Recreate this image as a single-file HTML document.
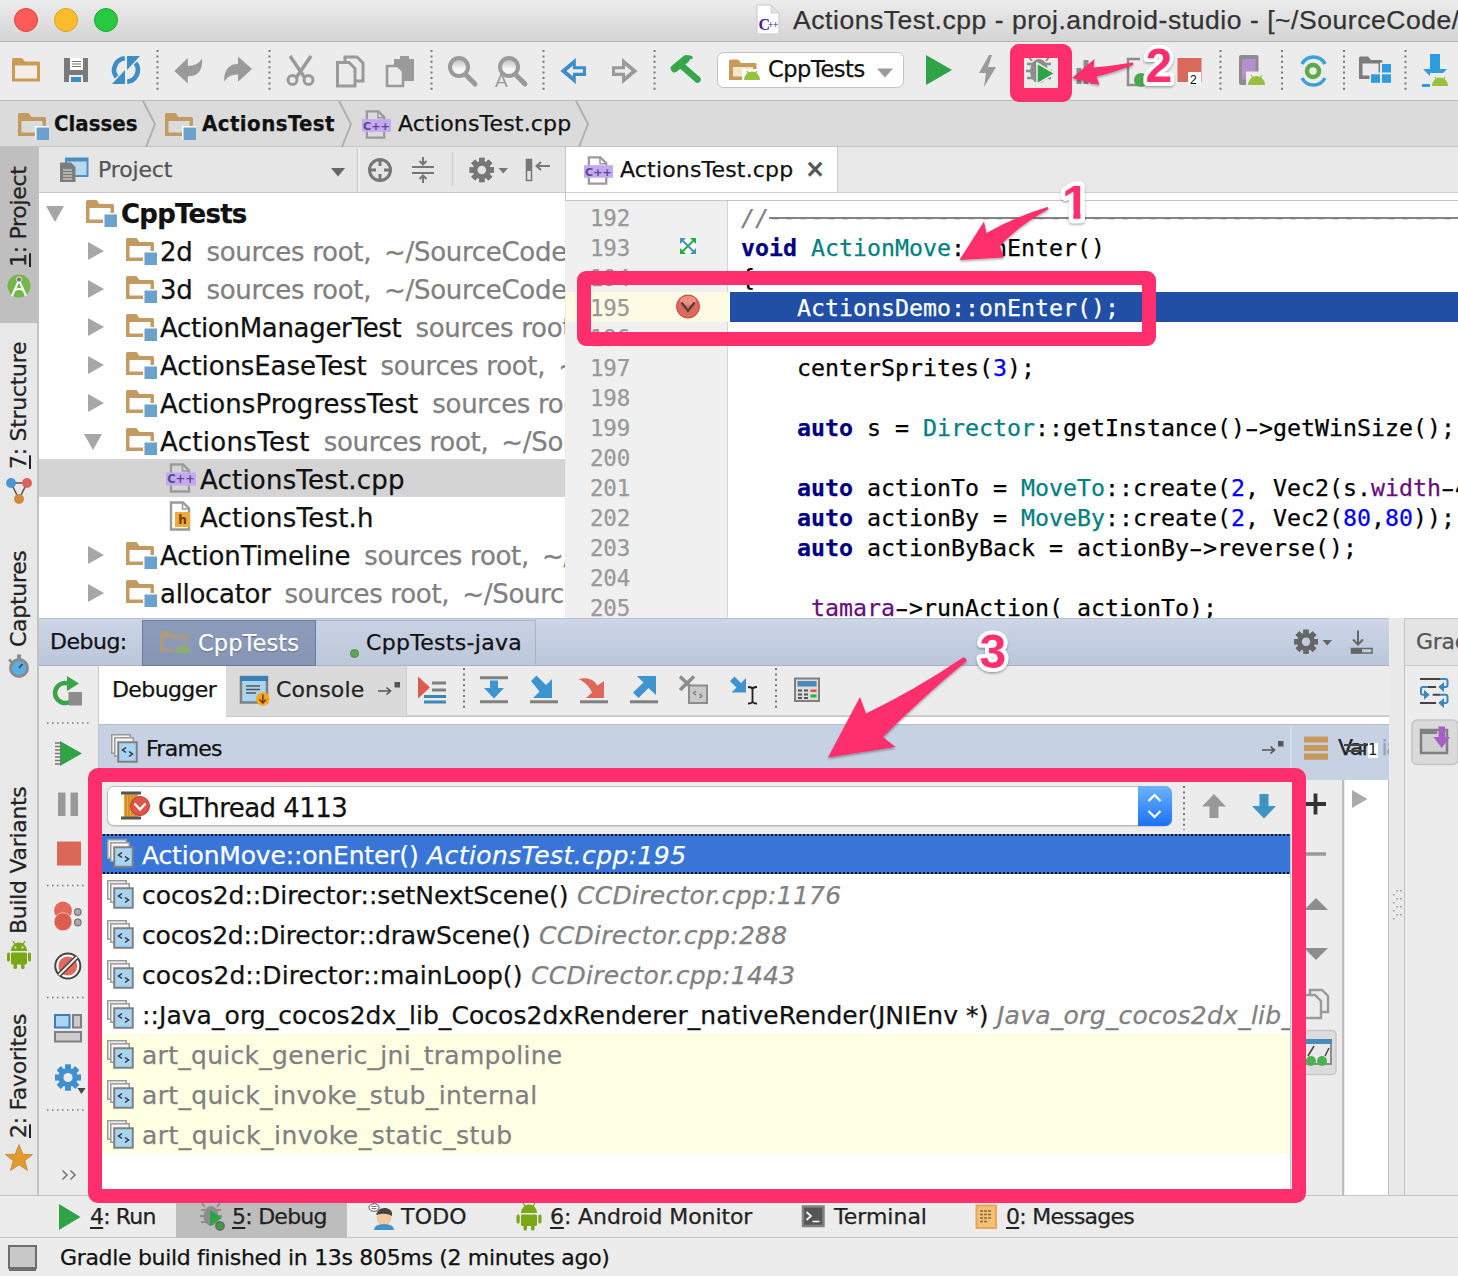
<!DOCTYPE html>
<html><head><meta charset="utf-8"><title>ActionsTest.cpp</title>
<style>
*{box-sizing:border-box;margin:0;padding:0}
html,body{width:1458px;height:1276px;overflow:hidden;background:#ececec}
body{position:relative;-webkit-text-stroke:0.25px;font-family:"DejaVu Sans","Liberation Sans",sans-serif;font-size:22px;color:#1a1a1a;-webkit-font-smoothing:antialiased}
.abs{position:absolute}
.t{position:absolute;white-space:pre;line-height:1}
svg{position:absolute;overflow:visible}
#titlebar{left:0;top:0;width:1458px;height:42px;background:linear-gradient(#ececec,#d4d4d4);border-bottom:1px solid #b4b4b4}
.tl{position:absolute;top:8px;width:24px;height:24px;border-radius:50%}
#toolbar{left:0;top:42px;width:1458px;height:59px;background:#ececec;border-bottom:1px solid #bdbdbd}
#navbar{left:0;top:101px;width:1458px;height:46px;background:#e0e0e0;border-bottom:1px solid #c4c4c4}
#leftstrip{left:0;top:147px;width:39px;height:1048px;background:#e8e8e8;border-right:2px solid #c2c2c2}
#projhead{left:39px;top:147px;width:526px;height:46px;background:#e6e6e6;border-bottom:1px solid #c9c9c9}
#tree{left:39px;top:193px;width:526px;height:425px;background:#fff;overflow:hidden}

#edtabs{left:565px;top:147px;width:893px;height:54px;background:#e8e8e8;border-left:1px solid #c4c4c4}
#edtab{left:566px;top:147px;width:272px;height:48px;background:#fff;border-right:1px solid #c9c9c9}
#edstrip{left:566px;top:192px;width:892px;height:10px;background:#fff;border-bottom:2px solid #c6c6c6;border-top:1px solid #d0d0d0}
#editor{left:566px;top:201px;width:892px;height:417px;background:#fff;overflow:hidden;border:0}
#gutter{left:0;top:0;width:162px;height:417px;background:#f0f0f0;border-right:1px solid #d4d4d4}
.ln{position:absolute;left:24px;font-family:"DejaVu Sans Mono","Liberation Mono",monospace;font-size:22.5px;color:#999;line-height:30px;height:30px;white-space:pre;letter-spacing:-0.2px}
.cl{position:absolute;left:175px;font-family:"DejaVu Sans Mono","Liberation Mono",monospace;font-size:23.25px;color:#000;line-height:30px;height:30px;white-space:pre}
.kw{color:#000080;font-weight:bold}.ty{color:#008080}.nu{color:#0000ff}.fd{color:#660e7a}.cm{color:#808080;font-style:italic}

.row{position:absolute;left:0;width:526px;height:38px}
.tt{position:absolute;top:5.500px;font-size:26px;line-height:30px;white-space:pre;letter-spacing:-0.3px;color:#111}
.tt i{font-style:normal;color:#808080;margin-left:14px;word-spacing:0px}
.tri-r{position:absolute;width:0;height:0;border-left:16px solid #a6a6a6;border-top:9px solid transparent;border-bottom:9px solid transparent}
.tri-d{position:absolute;width:0;height:0;border-top:16px solid #a6a6a6;border-left:9px solid transparent;border-right:9px solid transparent}
.vt{position:absolute;left:0;width:300px;height:38px;line-height:38px;font-size:22px;white-space:pre;transform-origin:0 0;transform:rotate(-90deg);text-align:left;color:#222;letter-spacing:-0.3px}
.vt u{text-decoration:underline;text-underline-offset:3px}
.nbb{font-family:"DejaVu Sans Condensed","DejaVu Sans",sans-serif;font-weight:bold;font-size:22px;color:#111}
#navbar{background:#dbdbdb}

#dbghead{left:39px;top:618px;width:1350px;height:48px;background:linear-gradient(#cdd6e7,#bac6db);border-top:1px solid #b6bfd0;border-bottom:1px solid #aab2c2}
#dbgtab1{left:103px;top:1px;width:174px;height:46px;background:linear-gradient(#8d9cba,#8595b4);border:1px solid #6c7b99}
#dbgtab2{left:277px;top:1px;width:220px;height:46px;background:linear-gradient(#c9d2e3,#bcc7da);border:1px solid #a9b3c6;border-left:0}
#dbgleft{left:39px;top:666px;width:60px;height:529px;background:#ececec;border-right:1px solid #c6c6c6}
#dbgtool{left:99px;top:666px;width:1290px;height:50px;background:#ececec;border-bottom:1px solid #d0d0d0}
#dbgwhite{left:99px;top:716px;width:1290px;height:8px;background:#fff;border-top:1px solid #c8c8c8}
#frhead{left:99px;top:724px;width:1290px;height:56px;background:#c7d1e4;border-top:1px solid #b4bccb}
#frcombo{left:99px;top:780px;width:1193px;height:54px;background:#ececec}
#frlist{left:99px;top:834px;width:1192px;height:361px;background:#fff;border-right:1px solid #c4c4c4}
.fr{position:absolute;left:0;width:1192px;height:40px}
.fr .a,.fr .b{position:absolute;top:6.500px;font-size:25px;line-height:30px;white-space:pre;color:#111}
.fr .b{font-style:italic;color:#808080}
.fr.lib{background:#ffffe4}.fr.lib .a{color:#808080}
#varcol{left:1306px;top:780px;width:38px;height:415px;background:#ececec;border-right:2px solid #bdbdbd}
#varwhite{left:1345px;top:780px;width:44px;height:415px;background:#fff;border-right:1px solid #bdbdbd}
#rightgap{left:1390px;top:618px;width:15px;height:577px;background:#e9e9e9;border-right:1px solid #c2c2c2}
#gradle{overflow:hidden;left:1405px;top:618px;width:53px;height:577px;background:#ececec}
#bottombar{left:0;top:1195px;width:1458px;height:43px;background:#ececec;border-top:1px solid #c4c4c4;border-bottom:1px solid #c4c4c4}
#statusbar{left:0;top:1238px;width:1458px;height:38px;background:#ececec}
.bt{position:absolute;top:9px;font-size:22px;line-height:24px;white-space:pre;color:#222}
.bt u{text-underline-offset:3px}

.pr{position:absolute;border:14px solid #ff2e6d;border-radius:9px;pointer-events:none}
.num{font-family:"Liberation Sans",sans-serif;font-weight:bold;fill:#ff2e6d;stroke:#fff;stroke-linejoin:round;paint-order:stroke fill}
#frlist{overflow:hidden}
.hy{display:inline-block;transform:scaleX(1.700)}
</style></head><body>
<svg width="0" height="0" style="position:absolute"><defs>
<symbol id="folder" viewBox="0 0 31 27"><path fill="#c39b62" fill-rule="evenodd" d="M0,1.5 Q0,0 1.5,0 H10.5 L13.5,4 H26.5 Q28,4 28,5.5 V23 H0 Z M3.5,8 V19.5 H24.5 V8 Z"/><rect x="17" y="13" width="14" height="14" fill="#fff"/><rect x="18.5" y="14.5" width="12.5" height="12.5" fill="#6ba2cb"/></symbol>
<symbol id="cppfile" viewBox="0 0 30 30"><path fill="none" stroke="#9a9a9a" stroke-width="2.4" d="M5,1.5 H17 L23,7.5 V28.5 H5 Z"/><path fill="none" stroke="#9a9a9a" stroke-width="1.6" d="M16.5,2 V8 H22.5"/><rect x="0" y="9.5" width="30" height="13" fill="#c3a9f2"/><text x="15" y="20.3" font-family="DejaVu Sans,sans-serif" font-weight="bold" font-size="11.5" text-anchor="middle" fill="#5b4a8a">C++</text></symbol>
<symbol id="hfile" viewBox="0 0 30 30"><path fill="#fff" stroke="#9a9a9a" stroke-width="2.4" d="M5,1.5 H17 L23,7.5 V28.5 H5 Z"/><path fill="none" stroke="#9a9a9a" stroke-width="1.6" d="M16.5,2 V8 H22.5"/><rect x="9" y="11" width="15" height="15" fill="#f2a93b"/><text x="16.5" y="23" font-family="DejaVu Sans,sans-serif" font-weight="bold" font-size="12" text-anchor="middle" fill="#6b3d00">h</text></symbol>
<symbol id="frame" viewBox="0 0 27 29"><g fill="#f4f4f4" stroke="#9a9a9a" stroke-width="1.500"><rect x="0.750" y="0.750" width="18.500" height="18.500"/><rect x="3.750" y="3.750" width="18.500" height="18.500"/></g><rect x="7.250" y="8.250" width="18.500" height="19.500" fill="#a9d4f2" stroke="#808080" stroke-width="2"/><path d="M15,13.500 L11.500,16 L15,18.500 M18,17.500 L21.500,20 L18,22.500" fill="none" stroke="#333" stroke-width="1.500"/></symbol>
</defs></svg>
<div id="titlebar" class="abs">
 <div class="tl" style="left:14px;background:#fc5b57;border:1px solid #e0443e"></div>
 <div class="tl" style="left:54px;background:#fdbc2e;border:1px solid #dea123"></div>
 <div class="tl" style="left:94px;background:#28c83f;border:1px solid #1aab29"></div>
 <div class="t" style="left:793px;top:7px;font-family:'Liberation Sans',sans-serif;font-size:26.500px;letter-spacing:0.55px;color:#333">ActionsTest.cpp - proj.android-studio - [~/SourceCode/</div>
</div>
<div id="toolbar" class="abs"><svg width="1458" height="59" style="left:0;top:0"><defs><linearGradient id="lens" x1="0" y1="0" x2="0" y2="1"><stop offset="0" stop-color="#b5b5b5"/><stop offset=".6" stop-color="#f4f4f4"/></linearGradient></defs>
<line x1="157.5" y1="8" x2="157.5" y2="51" stroke="#777" stroke-width="2" stroke-dasharray="2 3.4"/>
<line x1="269.5" y1="8" x2="269.5" y2="51" stroke="#777" stroke-width="2" stroke-dasharray="2 3.4"/>
<line x1="431.5" y1="8" x2="431.5" y2="51" stroke="#777" stroke-width="2" stroke-dasharray="2 3.4"/>
<line x1="543.5" y1="8" x2="543.5" y2="51" stroke="#777" stroke-width="2" stroke-dasharray="2 3.4"/>
<line x1="654.5" y1="8" x2="654.5" y2="51" stroke="#777" stroke-width="2" stroke-dasharray="2 3.4"/>
<line x1="1220.5" y1="8" x2="1220.5" y2="51" stroke="#777" stroke-width="2" stroke-dasharray="2 3.4"/>
<line x1="1282" y1="8" x2="1282" y2="51" stroke="#777" stroke-width="2" stroke-dasharray="2 3.4"/>
<line x1="1344" y1="8" x2="1344" y2="51" stroke="#777" stroke-width="2" stroke-dasharray="2 3.4"/>
<line x1="1405.5" y1="8" x2="1405.5" y2="51" stroke="#777" stroke-width="2" stroke-dasharray="2 3.4"/>
<path d="M12,17.5 Q12,16 13.5,16 H22 L25,19.5 H38.5 Q40,19.5 40,21 V39.5 H12 Z" fill="#c99a58"/><rect x="15" y="23.500" width="22" height="13" fill="#f3efe8"/>
<path d="M64,16 H88 V40 H64 Z" fill="#7a7a7a"/><rect x="70" y="16" width="13" height="12" fill="#fff"/><path d="M72,19.5h9M72,22h9M72,24.500h9" stroke="#777" stroke-width="1"/><rect x="69" y="33" width="14" height="7" fill="#ececec"/><rect x="71" y="35" width="10" height="5" fill="#3d8fc9"/>
<g fill="none" stroke="#3f8dc4" stroke-width="4.600"><path d="M124.800,16.300 A11.700,11.700 0 0 0 116.500,35"/><path d="M127.200,39.700 A11.700,11.700 0 0 0 135.500,21"/></g><path d="M112,42 H125 V28 Z" fill="#3f8dc4"/><path d="M140,14 H127 V28 Z" fill="#3f8dc4"/>
<path d="M174.400,29 L187.800,16 V24 Q198,24 202,16.500 Q203.500,34 187.800,34.500 V41.400 Z" fill="#9a9a9a"/>
<path d="M252,27 L238,14.500 V22 Q224,22 224,39.500 Q229,32 238,32.500 V39.800 Z" fill="#9a9a9a"/>
<g stroke="#9a9a9a" fill="none"><path d="M290,14 L305,36 M311,14 L296,36" stroke-width="3.500"/><circle cx="292.5" cy="38" r="4.500" stroke-width="3"/><circle cx="308.5" cy="38" r="4.500" stroke-width="3"/></g>
<g stroke="#9a9a9a" stroke-width="3" fill="#ececec"><path d="M345,15 H357 L363,21 V39 H345 Z"/><path d="M337.500,20.500 H349 L355,26.500 V44 H337.500 Z"/></g>
<g><path d="M394,17 H414 V39 H394 Z" fill="#9a9a9a"/><rect x="400" y="14" width="9" height="5" fill="#9a9a9a"/><path d="M387,24 H398 L403,29 V44 H387 Z" fill="#ececec" stroke="#9a9a9a" stroke-width="2.6"/></g>
<g stroke="#9a9a9a" fill="none"><circle cx="459" cy="25" r="9" stroke-width="4" fill="url(#lens)"/><path d="M465.500,32.5 L475,42" stroke-width="5" stroke-linecap="round"/></g>
<g stroke="#9a9a9a" fill="none"><circle cx="509" cy="25" r="9" stroke-width="4" fill="url(#lens)"/><path d="M515.500,32.5 L525,42" stroke-width="5" stroke-linecap="round"/></g><text x="495" y="45" font-family="Liberation Sans,sans-serif" font-size="19" fill="#9a9a9a">A</text>
<path d="M560.400,29 L575.800,16 V24.200 H586 V33.900 H575.800 V42 Z" fill="#3d8ec9"/><path d="M566.500,29 L573,23.500 V27.300 H583 V30.700 H573 V34.500 Z" fill="#ececec"/>
<path d="M637.500,29 L622,16 V24.200 H612 V33.900 H622 V42 Z" fill="#9a9a9a"/><path d="M631.500,29 L625,23.500 V27.300 H615 V30.700 H625 V34.500 Z" fill="#ececec"/>
<g stroke="#35a64a" stroke-linecap="round" fill="none"><path d="M682,24 L697.500,37.500" stroke-width="6.500"/><path d="M674.500,26.500 L686,17" stroke-width="7.500"/><path d="M684,16.500 Q688,14 691,15.500" stroke-width="3.500"/></g>
<rect x="717.500" y="10.500" width="186" height="35" rx="6" fill="#fff" stroke="#c2c2c2"/><path d="M729,19 Q729,17.500 730.500,17.500 H738 L741,21 H755 Q756.500,21 756.500,22.500 V38 H729 Z" fill="#c99a58"/><rect x="733" y="25" width="20" height="9.500" fill="#f4e6cc"/><rect x="742" y="27" width="19" height="12" fill="#fff"/><path d="M744,38 A8,8.500 0 0 1 760,38 Z" fill="#97c03d"/><path d="M747,29 l2,3 M757,29 l-2,3" stroke="#97c03d" stroke-width="1.300"/><path d="M877,26.500 H893 L885,35.500 Z" fill="#9a9a9a"/>
<path d="M926,13 L952,28 L926,43 Z" fill="#2fa447"/>
<path d="M989,13 L979,31 H986 L984,45 L996,25 H988 L992,13 Z" fill="#9a9a9a"/>
<g><ellipse cx="1039" cy="29" rx="9" ry="12" fill="#8d8d8d"/><path d="M1027,22h24M1026,29h26M1027,36h24" stroke="#8d8d8d" stroke-width="2.500"/><path d="M1032,19 L1028,14 M1046,19 L1050,14" stroke="#8d8d8d" stroke-width="2"/><path d="M1037,21 L1055,31.500 L1037,42 Z" fill="#2fa447" stroke="#ececec" stroke-width="1.500"/></g>
<path d="M1079,26v16M1086,18v24M1093,30v12" stroke="#8d8d8d" stroke-width="5"/>
<path d="M1140,17 H1128 V43 H1140" fill="none" stroke="#8d8d8d" stroke-width="2.500"/><circle cx="1141" cy="38" r="7" fill="#4da74b"/>
<rect x="1177.500" y="16" width="24" height="24" fill="#d9695a"/><rect x="1188" y="30" width="13" height="13" fill="#fff"/><text x="1190" y="41.500" font-family="Liberation Sans,sans-serif" font-size="12" fill="#000">2</text>
<rect x="1239" y="13" width="19.500" height="30" rx="2" fill="#8d8d8d"/><rect x="1242" y="17" width="13.500" height="20.500" fill="#b58fd0"/><rect x="1246" y="29.500" width="21" height="14.500" fill="#ececec"/><path d="M1248,43 A8.500,9 0 0 1 1265,43 Z" fill="#97c03d"/><path d="M1251,33 l2,3 M1262,33 l-2,3" stroke="#97c03d" stroke-width="1.300"/>
<g fill="none"><path d="M1302,22 A13,13 0 0 1 1325,22" stroke="#3ba0dc" stroke-width="3.500"/><path d="M1325,36 A13,13 0 0 1 1302,36" stroke="#3ba0dc" stroke-width="3.500"/><circle cx="1313" cy="29" r="6" stroke="#5aaa46" stroke-width="4.500"/></g>
<path d="M1359,16 Q1359,14.500 1360.500,14.500 H1368 L1371,18 H1381 Q1382.500,18 1382.500,19.500 V21 H1380 V37 H1359 Z" fill="#7c7c7c"/><rect x="1362.500" y="21.500" width="16" height="12" fill="#ececec"/><rect x="1369.500" y="30.500" width="24" height="13" fill="#ececec"/><rect x="1380.500" y="20.500" width="13" height="11" fill="#ececec"/><rect x="1382" y="22" width="9" height="8.500" fill="#2d9de0"/><rect x="1371" y="32.300" width="9" height="8.500" fill="#2d9de0"/><rect x="1382" y="32.300" width="9" height="8.500" fill="#2d9de0"/>
<path d="M1430,12 H1440 V27 H1447 L1435,39 L1423,27 H1430 Z" fill="#2d9de0"/><rect x="1422" y="42" width="10" height="3" fill="#2d9de0"/><rect x="1430" y="31" width="20" height="14" fill="#ececec"/><path d="M1432,44 A8,8.500 0 0 1 1448,44 Z" fill="#97c03d"/><path d="M1435,35 l2,3 M1445,35 l-2,3" stroke="#97c03d" stroke-width="1.300"/>
</svg><div class="t" style="left:768px;top:16px;font-size:22.500px;letter-spacing:-0.45px;color:#111">CppTests</div></div>
<div id="navbar" class="abs"><svg width="1458" height="46" style="left:0;top:0"><g fill="none" stroke="#b0b0b0" stroke-width="2"><path d="M143,0 L155,23 L146,46"/><path d="M339,0 L351,23 L342,46"/><path d="M576,0 L588,23 L579,46"/></g></svg>
<svg style="left:18px;top:12px" width="31" height="27"><use href="#folder"/></svg>
<svg style="left:165px;top:12px" width="31" height="27"><use href="#folder"/></svg>
<svg style="left:362px;top:9px" width="29" height="29"><use href="#cppfile"/></svg>
<div class="t nbb" style="left:54px;top:12px">Classes</div>
<div class="t nbb" style="left:202px;top:12px;letter-spacing:0.45px">ActionsTest</div>
<div class="t" style="left:398px;top:12px;font-size:22px;letter-spacing:0.18px;color:#111">ActionsTest.cpp</div>
</div>
<div id="leftstrip" class="abs">
<div class="abs" style="left:0;top:0;width:38px;height:176px;background:#bfbfbf"></div>
<div class="vt" style="top:120px"><u>1</u>: Project</div>
<div class="vt" style="top:322px"><u>7</u>: Structure</div>
<div class="vt" style="top:500px">Captures</div>
<div class="vt" style="top:787px">Build Variants</div>
<div class="vt" style="top:991px"><u>2</u>: Favorites</div>
</div>
<div id="projhead" class="abs"><div class="t" style="left:59px;top:12px;font-size:22px;letter-spacing:-0.15px;color:#555">Project</div></div>
<div id="tree" class="abs">
<div class="row" style="top:0px"><div class="tri-d" style="left:7px;top:13px"></div><svg style="left:47px;top:7px" width="31" height="27"><use href="#folder"/></svg><div class="tt" style="left:82px"><b style="letter-spacing:-0.75px">CppTests</b></div></div>
<div class="row" style="top:38px"><div class="tri-r" style="left:49px;top:11px"></div><svg style="left:87px;top:7px" width="31" height="27"><use href="#folder"/></svg><div class="tt" style="left:121px"><span style="letter-spacing:-0.3px">2d</span><i>sources root,<span style="margin-left:5px"> ~/SourceCode</span></i></div></div>
<div class="row" style="top:76px"><div class="tri-r" style="left:49px;top:11px"></div><svg style="left:87px;top:7px" width="31" height="27"><use href="#folder"/></svg><div class="tt" style="left:121px"><span style="letter-spacing:-0.3px">3d</span><i>sources root,<span style="margin-left:5px"> ~/SourceCode</span></i></div></div>
<div class="row" style="top:114px"><div class="tri-r" style="left:49px;top:11px"></div><svg style="left:87px;top:7px" width="31" height="27"><use href="#folder"/></svg><div class="tt" style="left:121px"><span style="letter-spacing:-0.3px">ActionManagerTest</span><i>sources root,<span style="margin-left:5px"> ~/SourceCode</span></i></div></div>
<div class="row" style="top:152px"><div class="tri-r" style="left:49px;top:11px"></div><svg style="left:87px;top:7px" width="31" height="27"><use href="#folder"/></svg><div class="tt" style="left:121px"><span style="letter-spacing:-0.1px">ActionsEaseTest</span><i>sources root,<span style="margin-left:5px"> ~/SourceCode</span></i></div></div>
<div class="row" style="top:190px"><div class="tri-r" style="left:49px;top:11px"></div><svg style="left:87px;top:7px" width="31" height="27"><use href="#folder"/></svg><div class="tt" style="left:121px"><span style="letter-spacing:0.06px">ActionsProgressTest</span><i>sources root,<span style="margin-left:5px"> ~/SourceCode</span></i></div></div>
<div class="row" style="top:228px"><div class="tri-d" style="left:45px;top:13px"></div><svg style="left:87px;top:7px" width="31" height="27"><use href="#folder"/></svg><div class="tt" style="left:121px"><span style="letter-spacing:0.32px">ActionsTest</span><i>sources root,<span style="margin-left:5px"> ~/SourceCode</span></i></div></div>
<div class="row" style="top:266px;background:#d4d4d4"><svg style="left:127px;top:4px" width="30" height="30"><use href="#cppfile"/></svg><div class="tt" style="left:161px"><span style="letter-spacing:0.2px">ActionsTest.cpp</span></div></div>
<div class="row" style="top:304px"><svg style="left:127px;top:4px" width="30" height="30"><use href="#hfile"/></svg><div class="tt" style="left:161px"><span style="letter-spacing:0.22px">ActionsTest.h</span></div></div>
<div class="row" style="top:342px"><div class="tri-r" style="left:49px;top:11px"></div><svg style="left:87px;top:7px" width="31" height="27"><use href="#folder"/></svg><div class="tt" style="left:121px"><span style="letter-spacing:-0.12px">ActionTimeline</span><i>sources root,<span style="margin-left:5px"> ~/SourceCode</span></i></div></div>
<div class="row" style="top:380px"><div class="tri-r" style="left:49px;top:11px"></div><svg style="left:87px;top:7px" width="31" height="27"><use href="#folder"/></svg><div class="tt" style="left:121px"><span style="letter-spacing:-0.3px">allocator</span><i>sources root,<span style="margin-left:5px"> ~/SourceCode</span></i></div></div>
</div>
<div id="edtabs" class="abs"></div>
<div id="edtab" class="abs"><svg style="left:18px;top:9px" width="29" height="29"><use href="#cppfile"/></svg><div class="t" style="left:54px;top:12px;font-size:22px;letter-spacing:0.18px;color:#111">ActionsTest.cpp</div><div class="t" style="left:239px;top:10px;font-size:24px;font-weight:bold;color:#555">×</div></div>
<div id="edstrip" class="abs"></div>
<div id="editor" class="abs">
<div id="gutter" class="abs"></div><div class="abs" style="left:203px;top:16.200px;width:690px;height:2px;background:#858585"></div>
<div class="abs" style="left:0;top:91px;width:162px;height:30px;background:#fffae3"></div>
<div class="abs" style="left:164px;top:91px;width:728px;height:30px;background:#214fa6"></div>
<div class="ln" style="top:2px">192</div><div class="cl" style="top:2px"><span class="cm">//<span style="position:relative;top:-1.800px">------------------------------------------------------------------</span></span></div>
<div class="ln" style="top:32px">193</div><div class="cl" style="top:32px"><span class="kw">void</span> <span class="ty">ActionMove</span>::onEnter()</div>
<div class="ln" style="top:62px">194</div><div class="cl" style="top:62px">{</div>
<div class="ln" style="top:92px">195</div><div class="cl" style="top:92px;color:#fff">    ActionsDemo::onEnter();</div>
<div class="ln" style="top:122px">196</div>
<div class="ln" style="top:152px">197</div><div class="cl" style="top:152px">    centerSprites(<span class="nu">3</span>);</div>
<div class="ln" style="top:182px">198</div>
<div class="ln" style="top:212px">199</div><div class="cl" style="top:212px">    <span class="kw">auto</span> s = <span class="ty">Director</span>::getInstance()<span class="hy">-</span>&gt;getWinSize();</div>
<div class="ln" style="top:242px">200</div>
<div class="ln" style="top:272px">201</div><div class="cl" style="top:272px">    <span class="kw">auto</span> actionTo = <span class="ty">MoveTo</span>::create(<span class="nu">2</span>, Vec2(s.<span class="fd">width</span><span class="hy">-</span>40, s.height-40));</div>
<div class="ln" style="top:302px">202</div><div class="cl" style="top:302px">    <span class="kw">auto</span> actionBy = <span class="ty">MoveBy</span>::create(<span class="nu">2</span>, Vec2(<span class="nu">80</span>,<span class="nu">80</span>));</div>
<div class="ln" style="top:332px">203</div><div class="cl" style="top:332px">    <span class="kw">auto</span> actionByBack = actionBy<span class="hy">-</span>&gt;reverse();</div>
<div class="ln" style="top:362px">204</div>
<div class="ln" style="top:392px">205</div><div class="cl" style="top:392px">    <span class="fd">_tamara</span><span class="hy">-</span>&gt;runAction( actionTo);</div>
</div>
<div id="dbghead" class="abs">
<div class="t" style="left:11px;top:12px;font-size:22px;letter-spacing:-0.5px;color:#111">Debug:</div>
<div id="dbgtab1" class="abs"><svg style="left:17px;top:10px;opacity:.55" width="31" height="24" viewBox="0 0 31 24"><path d="M0,1.500 Q0,0 1.500,0 H9.500 L12.500,3.500 H26.500 Q28,3.500 28,5 V21 H0 Z" fill="#c99a58"/><rect x="4" y="7.500" width="20" height="10" fill="#8d9cba"/><rect x="14" y="11" width="18" height="12" fill="#8d9cba"/><path d="M15.500,22 A7.500,8 0 0 1 30.500,22 Z" fill="#97c03d"/></svg><div class="t" style="left:55px;top:11px;font-size:22.500px;letter-spacing:0.1px;color:#fff;text-shadow:0 1px 1px rgba(0,0,0,.35)">CppTests</div></div>
<div id="dbgtab2" class="abs"><div class="abs" style="left:34px;top:28px;width:9px;height:9px;border-radius:50%;background:#62a55a;border:1px solid #4a8a44"></div><div class="t" style="left:50px;top:11px;font-size:22px;letter-spacing:0.3px;color:#111">CppTests-java</div></div>
</div>
<div id="dbgleft" class="abs"></div>
<div id="dbgtool" class="abs">
<div class="abs" style="left:127px;top:0;width:181px;height:50px;background:#dadada;border-right:1px solid #cfcfcf"></div>
<div class="t" style="left:177px;top:13px;font-size:22px;letter-spacing:0.15px;color:#222">Console</div>
</div>
<div id="dbgwhite" class="abs"></div>
<div class="abs" style="left:99px;top:666px;width:127px;height:58px;background:#fff"></div>
<div class="t" style="left:112px;top:679px;font-size:22px;letter-spacing:-0.6px;color:#111">Debugger</div>
<div id="frhead" class="abs"><svg style="left:12px;top:9px" width="27" height="29"><use href="#frame"/></svg><div class="t" style="left:47px;top:13px;font-size:22px;letter-spacing:-0.7px;color:#111">Frames</div></div>
<div class="abs" style="left:1336px;top:730px;width:53px;height:40px;overflow:hidden"><div class="t" style="left:2px;top:7px;font-size:22px;letter-spacing:-1.5px;color:#222">Var<span style="color:#9aa3b3;margin-left:12px">iables</span></div><div class="t" style="left:32px;top:13px;width:10px;height:15px;background:#fff;font-size:15px;line-height:15px;color:#222;-webkit-text-stroke:0">1</div><div class="abs" style="left:8px;top:14px;width:22px;height:2px;background:#444"></div><div class="abs" style="left:10px;top:20px;width:18px;height:2px;background:#444"></div></div>
<div id="frcombo" class="abs"><div class="abs" style="left:8px;top:6px;width:1065px;height:40px;background:#fff;border:1px solid #bcbcbc;border-radius:7px;box-shadow:0 1px 1px rgba(0,0,0,.12)"></div>
<div class="abs" style="left:1039px;top:6px;width:34px;height:40px;border-radius:0 7px 7px 0;background:linear-gradient(#6db3fc,#1a71f4)"></div>
<div class="t" style="left:59px;top:14.500px;font-size:26px;letter-spacing:-0.55px;color:#111">GLThread 4113</div>
</div>
<div id="frlist" class="abs">
<div class="fr" style="top:0px;background:repeating-linear-gradient(90deg,#111 0 2px,transparent 2px 4px) 0 0/100% 2px no-repeat,repeating-linear-gradient(90deg,#111 0 2px,transparent 2px 4px) 0 100%/100% 2px no-repeat,#3875d7"><svg style="left:7.500px;top:5px" width="27" height="29"><use href="#frame"/></svg><div class="a" style="left:43px;letter-spacing:-0.164px;color:#fff">ActionMove::onEnter()</div><div class="b" style="left:328px;letter-spacing:0.409px;color:#fff">ActionsTest.cpp:195</div></div>
<div class="fr" style="top:40px"><svg style="left:7.500px;top:6px" width="27" height="29"><use href="#frame"/></svg><div class="a" style="left:43px;letter-spacing:-0.068px">cocos2d::Director::setNextScene()</div><div class="b" style="left:478px;letter-spacing:0.285px">CCDirector.cpp:1176</div></div>
<div class="fr" style="top:80px"><svg style="left:7.500px;top:6px" width="27" height="29"><use href="#frame"/></svg><div class="a" style="left:43px;letter-spacing:-0.190px">cocos2d::Director::drawScene()</div><div class="b" style="left:440px;letter-spacing:0.296px">CCDirector.cpp:288</div></div>
<div class="fr" style="top:120px"><svg style="left:7.500px;top:6px" width="27" height="29"><use href="#frame"/></svg><div class="a" style="left:43px;letter-spacing:0.070px">cocos2d::Director::mainLoop()</div><div class="b" style="left:432px;letter-spacing:0.285px">CCDirector.cpp:1443</div></div>
<div class="fr" style="top:160px"><svg style="left:7.500px;top:6px" width="27" height="29"><use href="#frame"/></svg><div class="a" style="left:43px;letter-spacing:0.055px">::Java_org_cocos2dx_lib_Cocos2dxRenderer_nativeRender(JNIEnv *)</div><div class="b" style="left:898px;letter-spacing:0.250px">Java_org_cocos2dx_lib_Cocos2dxRenderer</div></div>
<div class="fr lib" style="top:200px"><svg style="left:7.500px;top:6px" width="27" height="29"><use href="#frame"/></svg><div class="a" style="left:43px;letter-spacing:0.281px">art_quick_generic_jni_trampoline</div></div>
<div class="fr lib" style="top:240px"><svg style="left:7.500px;top:6px" width="27" height="29"><use href="#frame"/></svg><div class="a" style="left:43px;letter-spacing:0.363px">art_quick_invoke_stub_internal</div></div>
<div class="fr lib" style="top:280px"><svg style="left:7.500px;top:6px" width="27" height="29"><use href="#frame"/></svg><div class="a" style="left:43px;letter-spacing:0.471px">art_quick_invoke_static_stub</div></div>
</div>
<div id="varcol" class="abs"></div>
<div id="varwhite" class="abs"></div>
<div id="rightgap" class="abs"></div>
<div id="gradle" class="abs"><div class="abs" style="left:0;top:0;width:53px;height:48px;background:#e4e4e4;border-top:1px solid #c8c8c8;border-bottom:1px solid #c8c8c8"></div><div class="t" style="left:11px;top:13px;font-size:22px;color:#555;letter-spacing:-0.3px">Gradle</div></div>
<div id="bottombar" class="abs">
<div class="abs" style="left:176px;top:0;width:171px;height:42px;background:#bdbdbd"></div>
<div class="bt" style="left:90px;letter-spacing:-0.85px"><u>4</u>: Run</div>
<div class="bt" style="left:232px;letter-spacing:-0.75px"><u>5</u>: Debug</div>
<div class="bt" style="left:401px;letter-spacing:0.2px">TODO</div>
<div class="bt" style="left:550px;letter-spacing:-0.1px"><u>6</u>: Android Monitor</div>
<div class="bt" style="left:834px;letter-spacing:0.0px">Terminal</div>
<div class="bt" style="left:1006px;letter-spacing:-0.75px"><u>0</u>: Messages</div>
</div>
<div id="statusbar" class="abs"><div class="abs" style="left:8px;top:7px;width:29px;height:24px;background:#c8c8c8;border:2px solid #6e6e6e;box-shadow:0 3px 0 -1px #6e6e6e"></div><div class="t" style="left:60px;top:9px;font-size:22px;letter-spacing:-0.32px;color:#111">Gradle build finished in 13s 805ms (2 minutes ago)</div></div>
<svg id="icons" width="1458" height="1276" style="left:0;top:0;pointer-events:none">
<g><path d="M757,5 H771 L779,13 V34 H757 Z" fill="#fff" stroke="#c8c8c8" stroke-width="1"/><path d="M771,5 V13 H779 Z" fill="#e4e4e4" stroke="#c8c8c8" stroke-width=".8"/><text x="758.500" y="30" font-family="Liberation Serif,serif" font-weight="bold" font-size="16" fill="#4b1a8c">C</text><text x="768" y="28" font-family="Liberation Serif,serif" font-weight="bold" font-size="9.500" fill="#4b1a8c" letter-spacing="-0.5">++</text></g>
<g><rect x="66" y="158.500" width="21.500" height="17.500" fill="#b7d8f1" stroke="#4c8fc0" stroke-width="2"/><rect x="66" y="158" width="22" height="3.500" fill="#4c8fc0"/><path d="M60,162.500 H71 L75.500,167 V182 H60 Z" fill="#7d7d7d"/><path d="M63,170h9M63,173h9M63,176h9M63,179h9" stroke="#e6e6e6" stroke-width="1.200"/></g>
<path d="M331,168 H345 L338,176.500 Z" fill="#666"/>
<line x1="357.500" y1="148" x2="357.500" y2="192" stroke="#cfcfcf" stroke-width="1.500"/><line x1="359" y1="148" x2="359" y2="192" stroke="#f2f2f2" stroke-width="1.500"/>
<g stroke="#777" fill="none"><circle cx="380" cy="170" r="10.500" stroke-width="3"/><path d="M380,159v7M380,174v7M369,170h7M384,170h7" stroke-width="3"/></g>
<g stroke="#777" fill="none" stroke-width="2"><path d="M412,167h22M412,173h22M423,157v7M423,176v7"/><path d="M419.500,161 L423,164.500 L426.500,161 M419.500,179 L423,175.500 L426.500,179"/></g>
<line x1="452.500" y1="152" x2="452.500" y2="186" stroke="#cfcfcf" stroke-width="1.500"/>
<rect x="479.12" y="157.80" width="5.37" height="24.40" fill="#777" transform="rotate(0 481.8 170)"/><rect x="479.12" y="157.80" width="5.37" height="24.40" fill="#777" transform="rotate(45 481.8 170)"/><rect x="479.12" y="157.80" width="5.37" height="24.40" fill="#777" transform="rotate(90 481.8 170)"/><rect x="479.12" y="157.80" width="5.37" height="24.40" fill="#777" transform="rotate(135 481.8 170)"/><rect x="479.12" y="157.80" width="5.37" height="24.40" fill="#777" transform="rotate(180 481.8 170)"/><rect x="479.12" y="157.80" width="5.37" height="24.40" fill="#777" transform="rotate(225 481.8 170)"/><rect x="479.12" y="157.80" width="5.37" height="24.40" fill="#777" transform="rotate(270 481.8 170)"/><rect x="479.12" y="157.80" width="5.37" height="24.40" fill="#777" transform="rotate(315 481.8 170)"/><circle cx="481.8" cy="170" r="9.03" fill="#777"/><circle cx="481.8" cy="170" r="4.3" fill="#e4e4e4"/><path d="M498.500,168 H508 L503.200,173.500 Z" fill="#777"/>
<rect x="526.500" y="159.500" width="5" height="21" fill="#e4e4e4" stroke="#777" stroke-width="1.500"/><rect x="526" y="159" width="6" height="12" fill="#777"/><path d="M550,166 H537 M541,162 L536.500,166 L541,170" stroke="#777" stroke-width="2" fill="none"/>
<g><circle cx="19" cy="286" r="11.500" fill="#74b84a"/><path d="M12,296 L19,280 L26,296 M14.500,290.500 Q19,287.500 23.500,290.500" stroke="#fff" stroke-width="2" fill="none"/><circle cx="19" cy="279.500" r="2.600" fill="#7a7a7a" stroke="#fff" stroke-width=".8"/></g>
<g><path d="M11,483 H27 L19,499 Z" fill="none" stroke="#555" stroke-width="1.500"/><circle cx="11" cy="483" r="5" fill="#4a97d6"/><circle cx="27" cy="483" r="5" fill="#e0605a"/><circle cx="19" cy="499" r="5" fill="#cf8a3c"/></g>
<g><circle cx="19" cy="668" r="8.500" fill="#5aaee6" stroke="#8a8a8a" stroke-width="3"/><path d="M19,668 L22.500,664" stroke="#444" stroke-width="1.800"/><rect x="17" y="654.500" width="4" height="4" fill="#8a8a8a"/><path d="M9,659.500 l3,3" stroke="#8a8a8a" stroke-width="2.500"/></g>
<g transform="translate(0,-3)"><g fill="#7aa716"><path d="M11,954 A8,8.500 0 0 1 27,954 Z"/><rect x="11" y="955.500" width="16" height="12" rx="1.500"/><rect x="7" y="955.500" width="3" height="9" rx="1.500"/><rect x="28" y="955.500" width="3" height="9" rx="1.500"/><rect x="13.500" y="964" width="3.500" height="8" rx="1.500"/><rect x="21" y="964" width="3.500" height="8" rx="1.500"/><path d="M13,944 l2.500,4 M25,944 l-2.500,4" stroke="#7aa716" stroke-width="1.300"/></g><circle cx="15.500" cy="950.500" r="1" fill="#fff"/><circle cx="22.500" cy="950.500" r="1" fill="#fff"/></g>
<path d="M19,1144.500 L22.800,1154.200 L32.500,1154.600 L24.800,1160.800 L27.500,1170.500 L19,1164.800 L10.500,1170.500 L13.200,1160.800 L5.500,1154.600 L15.200,1154.200 Z" fill="#e09a2e" stroke="#c7832a" stroke-width=".8"/>
<g><path d="M75,694 A10,10 0 1 1 68,683.500" fill="none" stroke="#3aa548" stroke-width="4.500"/><path d="M67,676 L79,683.500 L67,691 Z" fill="#3aa548"/><rect x="68.500" y="692" width="13.500" height="13.500" fill="#8d8d8d"/></g>
<line x1="47" y1="723" x2="90" y2="723" stroke="#777" stroke-width="1.500" stroke-dasharray="1.500 3.500"/>
<g><path d="M60,741 L82,753.500 L60,766 Z" fill="#2fa447"/><path d="M55,743h7M55,746.500h7M55,750h7M55,753.500h7M55,757h7M55,760.500h7M55,764h7" stroke="#777" stroke-width="1.500"/></g>
<rect x="58" y="792.500" width="7.500" height="23.500" fill="#999"/><rect x="70.500" y="792.500" width="7.500" height="23.500" fill="#999"/>
<rect x="57" y="841.500" width="24" height="24" fill="#da6758"/>
<line x1="47" y1="885.5" x2="85" y2="885.5" stroke="#777" stroke-width="1.500" stroke-dasharray="1.500 3.500"/>
<g><circle cx="63" cy="910.500" r="9" fill="#e2695b"/><circle cx="63" cy="921.800" r="9" fill="#da5d50" stroke="#eee" stroke-width=".6"/><circle cx="77.800" cy="912" r="3.300" fill="#aaa" stroke="#777" stroke-width="1.200"/><circle cx="77.800" cy="922.500" r="3.300" fill="#aaa" stroke="#777" stroke-width="1.200"/></g>
<g><circle cx="67.800" cy="966" r="12.500" fill="#fff" stroke="#444" stroke-width="2"/><circle cx="67.800" cy="966" r="9.500" fill="#e2695b"/><path d="M59,975 L77,957" stroke="#444" stroke-width="5"/><path d="M59,975 L77,957" stroke="#eee" stroke-width="2"/></g>
<line x1="47" y1="997.5" x2="85" y2="997.5" stroke="#777" stroke-width="1.500" stroke-dasharray="1.500 3.500"/>
<g><rect x="55" y="1015" width="14.500" height="12.500" fill="#a9d4f2" stroke="#3d7fb5" stroke-width="2"/><rect x="73" y="1015" width="8" height="12.500" fill="#ccc" stroke="#808080" stroke-width="2"/><rect x="55" y="1032" width="26" height="9.500" fill="#ccc" stroke="#808080" stroke-width="2"/></g>
<rect x="65.14" y="1064.50" width="5.72" height="26.00" fill="#3f8fce" transform="rotate(0 68 1077.5)"/><rect x="65.14" y="1064.50" width="5.72" height="26.00" fill="#3f8fce" transform="rotate(45 68 1077.5)"/><rect x="65.14" y="1064.50" width="5.72" height="26.00" fill="#3f8fce" transform="rotate(90 68 1077.5)"/><rect x="65.14" y="1064.50" width="5.72" height="26.00" fill="#3f8fce" transform="rotate(135 68 1077.5)"/><rect x="65.14" y="1064.50" width="5.72" height="26.00" fill="#3f8fce" transform="rotate(180 68 1077.5)"/><rect x="65.14" y="1064.50" width="5.72" height="26.00" fill="#3f8fce" transform="rotate(225 68 1077.5)"/><rect x="65.14" y="1064.50" width="5.72" height="26.00" fill="#3f8fce" transform="rotate(270 68 1077.5)"/><rect x="65.14" y="1064.50" width="5.72" height="26.00" fill="#3f8fce" transform="rotate(315 68 1077.5)"/><circle cx="68" cy="1077.5" r="9.62" fill="#3f8fce"/><circle cx="68" cy="1077.5" r="4.6" fill="#ececec"/><path d="M77.500,1088 H85.500 L81.500,1094 Z" fill="#444"/>
<line x1="47" y1="1110" x2="85" y2="1110" stroke="#777" stroke-width="1.500" stroke-dasharray="1.500 3.500"/>
<path d="M62.500,1170.500 L67,1175 L62.500,1179.500 M70.500,1170.500 L75,1175 L70.500,1179.500" fill="none" stroke="#777" stroke-width="1.600"/>
<rect x="1303.36" y="629.70" width="5.28" height="24.00" fill="#666" transform="rotate(0 1306 641.7)"/><rect x="1303.36" y="629.70" width="5.28" height="24.00" fill="#666" transform="rotate(45 1306 641.7)"/><rect x="1303.36" y="629.70" width="5.28" height="24.00" fill="#666" transform="rotate(90 1306 641.7)"/><rect x="1303.36" y="629.70" width="5.28" height="24.00" fill="#666" transform="rotate(135 1306 641.7)"/><rect x="1303.36" y="629.70" width="5.28" height="24.00" fill="#666" transform="rotate(180 1306 641.7)"/><rect x="1303.36" y="629.70" width="5.28" height="24.00" fill="#666" transform="rotate(225 1306 641.7)"/><rect x="1303.36" y="629.70" width="5.28" height="24.00" fill="#666" transform="rotate(270 1306 641.7)"/><rect x="1303.36" y="629.70" width="5.28" height="24.00" fill="#666" transform="rotate(315 1306 641.7)"/><circle cx="1306" cy="641.7" r="8.88" fill="#666"/><circle cx="1306" cy="641.7" r="4.2" fill="#c4cee1"/><path d="M1322.500,640 H1332 L1327.200,645.500 Z" fill="#666"/>
<path d="M1358,630.500 V644 M1353,639.500 L1358,644.500 L1363,639.500" stroke="#666" stroke-width="2" fill="none"/><rect x="1351.500" y="648.500" width="20.500" height="4.500" fill="#c4cee1" stroke="#666" stroke-width="1.500"/><rect x="1351" y="648" width="11" height="5.500" fill="#666"/>
<g><rect x="241" y="677" width="26" height="25.500" fill="#a9d4f2" stroke="#808080" stroke-width="2.500"/><rect x="240" y="676" width="28" height="5" fill="#3d7fb5"/><path d="M246,686h14M246,689.500h14M246,693h10" stroke="#555" stroke-width="1.300"/><circle cx="262.800" cy="699" r="6.800" fill="#f5a623"/><path d="M262.800,694.500 V702.500 M259.500,699.500 L262.800,703 L266,699.500" stroke="#7a3e00" stroke-width="1.600" fill="none"/></g>
<path d="M378,691 H390 M386.500,687.500 L390.500,691 L386.500,694.500" stroke="#555" stroke-width="1.600" fill="none"/><rect x="394.500" y="682" width="5.500" height="5.500" fill="#555"/>
<path d="M418,676.500 L430,687.500 L418,698.500 Z" fill="#dd5a4e"/><path d="M432,683h14M432,690h14" stroke="#808080" stroke-width="3"/><path d="M424,696.500h22M424,702h22" stroke="#3d87b8" stroke-width="3"/>
<line x1="464" y1="668" x2="464" y2="708" stroke="#777" stroke-width="2" stroke-dasharray="2 3.400"/>
<path d="M480,677.800h28M480,701.800h28" stroke="#808080" stroke-width="3"/><path d="M490,680.500 H498 V688 H504 L494,698.500 L484,688 H490 Z" fill="#3d94cf"/>
<path d="M530,701.800h28" stroke="#808080" stroke-width="3"/><path d="M531,681 L536.500,675.500 L546,685 L552,679 V698 H533 L539.500,691.500 Z" fill="#3d94cf"/>
<path d="M580,701.800h28" stroke="#808080" stroke-width="3"/><path d="M578.500,679 Q592,676 597.500,685.500 L604,681 V698 H586 L592,692.500 Q588,683 578.500,679 Z" fill="#e0675a"/>
<path d="M630,701.800h28" stroke="#808080" stroke-width="3"/><path d="M633,692.500 L638.500,698 L648.500,688 L656,695 V676 H637 L643.500,682.500 Z" fill="#3d94cf"/>
<path d="M680,676.500 L694,690 M694,676.500 L680,690" stroke="#8d8d8d" stroke-width="3.500"/><rect x="689" y="685.500" width="18" height="17.500" fill="#c9c9c9" stroke="#8d8d8d" stroke-width="2"/><path d="M696,691 L693.500,693 L696,695 M699.500,694 L702,696 L699.500,698" fill="none" stroke="#777" stroke-width="1.200"/>
<path d="M730,681 L734.500,676.500 L741,683 L746,678 V692.500 H731.500 L736.500,687.500 Z" fill="#3d94cf"/><path d="M748,687 Q752.500,687 752.500,689.500 Q752.500,687 757,687 M752.500,689 V701 M748,703.500 Q752.500,703.500 752.500,701 Q752.500,703.500 757,703.500" stroke="#222" stroke-width="1.800" fill="none"/>
<line x1="776" y1="668" x2="776" y2="708" stroke="#777" stroke-width="2" stroke-dasharray="2 3.400"/>
<rect x="795" y="678.500" width="24" height="22.500" fill="#ddd" stroke="#808080" stroke-width="2"/><rect x="797.500" y="681" width="19" height="5.500" fill="#4a8ab8"/><path d="M798,690.500h4M804,690.500h4M798,694.500h4M804,694.500h4M798,698h4M804,698h4" stroke="#555" stroke-width="1.800"/><rect x="810.500" y="689.500" width="6" height="2.500" fill="#d9534a"/><rect x="810.500" y="694.500" width="6" height="3" fill="#1eb83b"/>
<path d="M1262,750 H1274 M1270.500,746.500 L1274.500,750 L1270.500,753.500" stroke="#555" stroke-width="1.600" fill="none"/><rect x="1278" y="741" width="5.500" height="5.500" fill="#555"/>
<line x1="1291" y1="726" x2="1291" y2="780" stroke="#dbe2ef" stroke-width="1.500"/>
<rect x="1304" y="736.500" width="24" height="6" fill="#c79a5b"/><rect x="1304" y="745" width="24" height="6" fill="#c79a5b"/><rect x="1304" y="753.500" width="24" height="6.300" fill="#c79a5b"/>
<g><rect x="124" y="793" width="14" height="25" fill="#e8a838"/><path d="M126,795v21M129,795v21M132,795v21M135,795v21" stroke="#b8791f" stroke-width="1"/><rect x="121" y="791.500" width="20" height="3" fill="#555"/><rect x="121" y="816.500" width="20" height="3" fill="#555"/><circle cx="140" cy="806" r="9.500" fill="#e0554a" stroke="#b33a31" stroke-width="1"/><path d="M134.500,803.500 L140,809.500 L145.500,803.500" stroke="#fff" stroke-width="2.300" fill="none"/></g>
<path d="M1148.500,801 L1154.500,795 L1160.500,801 M1148.500,811 L1154.500,817 L1160.500,811" stroke="#fff" stroke-width="2.200" fill="none"/>
<line x1="1184" y1="786" x2="1184" y2="830" stroke="#777" stroke-width="2" stroke-dasharray="2 3.400"/>
<path d="M1214,794 L1226,806.500 H1218.500 V818 H1209.500 V806.500 H1202 Z" fill="#999"/>
<path d="M1264,818.500 L1276,806 H1268.500 V794 H1259.500 V806 H1252 Z" fill="#3e94c3"/>
<path d="M1305,804 H1326 M1315.500,793.500 V814.500" stroke="#333" stroke-width="3.800"/>
<path d="M1306,854 H1326" stroke="#999" stroke-width="3.500"/>
<path d="M1304,910 L1316,898 L1328,910 Z" fill="#8d8d8d"/><path d="M1304,948 L1316,960 L1328,948 Z" fill="#8d8d8d"/>
<g stroke="#9a9a9a" stroke-width="2.400" fill="#ececec"><path d="M1310,990 H1322 L1328,996 V1012 H1310 Z"/><path d="M1303,995 H1315 L1321,1001 V1018 H1303 Z"/></g>
<rect x="1300" y="1030.500" width="36" height="44" rx="4" fill="#dcdcdc" stroke="#c6c6c6" stroke-width="1.500"/><rect x="1304" y="1040" width="27" height="24" fill="#e8e8e8" stroke="#8d8d8d" stroke-width="2"/><rect x="1303" y="1039" width="29" height="5" fill="#4a8ab8"/><circle cx="1311" cy="1061" r="5" fill="#4db052"/><circle cx="1322" cy="1061" r="5" fill="#4db052"/><path d="M1308,1056 L1314,1046 M1325,1056 L1329,1048" stroke="#444" stroke-width="1.500"/>
<path d="M1352,790 L1367.500,799 L1352,808 Z" fill="#aaa"/>
<g fill="#999"><rect x="1396.5" y="890" width="1.500" height="1.500"/><rect x="1400" y="890" width="1.500" height="1.500"/><rect x="1393" y="894" width="1.500" height="1.500"/><rect x="1396.5" y="898" width="1.500" height="1.500"/><rect x="1400" y="898" width="1.500" height="1.500"/><rect x="1393" y="902" width="1.500" height="1.500"/><rect x="1396.5" y="906" width="1.500" height="1.500"/><rect x="1400" y="906" width="1.500" height="1.500"/><rect x="1393" y="910" width="1.500" height="1.500"/><rect x="1396.5" y="914" width="1.500" height="1.500"/><rect x="1400" y="914" width="1.500" height="1.500"/><rect x="1393" y="918" width="1.500" height="1.500"/></g>
<g fill="none" stroke-width="2"><path d="M1420,679h20M1428,687h8M1432.700,694.700h7.300M1420,703h16" stroke="#444"/><path d="M1440,679 H1445.500 Q1447.500,679 1447.500,681 V685 Q1447.500,687 1445.500,687 H1443 M1428,687 H1423 Q1421,687 1421,689 V692.700 Q1421,694.700 1423,694.700 H1425 M1440,694.700 H1445.500 Q1447.500,694.700 1447.500,696.700 V701 Q1447.500,703 1445.500,703 H1443" stroke="#3a87c0"/></g><path d="M1438.300,687 L1444,682 V692 Z M1429.600,694.700 L1424,689.700 V699.700 Z M1438.300,703 L1444,698 V708 Z" fill="#3a87c0"/>
<rect x="1412" y="720" width="46" height="44.500" rx="5" fill="#dadada" stroke="#c4c4c4" stroke-width="1.500"/><rect x="1421" y="730" width="26" height="23" fill="#d0d0d0" stroke="#808080" stroke-width="2.500"/><rect x="1420" y="729" width="17" height="5" fill="#808080"/><path d="M1438.500,726.500 H1445 V737 H1450 L1441.700,748 L1433.500,737 H1438.500 Z" fill="#a460c4"/>
<g><rect x="680" y="238" width="16" height="16" fill="#fff"/><path d="M681,253 L695,239" stroke="#1fae3c" stroke-width="2"/><path d="M681,239 L695,253" stroke="#4a90b8" stroke-width="2"/><path d="M680,238 h6 l-6,6Z M696,254 h-6 l6,-6Z" fill="#4a90b8"/><path d="M696,238 h-6 l6,6Z M680,254 h6 l-6,-6Z" fill="#1fae3c"/></g>
<g><circle cx="688" cy="306.500" r="11.500" fill="#e2685c" stroke="#c2473d" stroke-width="1"/><ellipse cx="688" cy="300.500" rx="8" ry="4.500" fill="#f0988f" opacity=".8"/><path d="M681.500,302.500 L688,311 L694.500,302.500" stroke="#444" stroke-width="2.200" fill="none"/></g>
<path d="M59,1204 L80.500,1217 L59,1230 Z" fill="#2fa447"/>
<g><ellipse cx="211" cy="1216" rx="7.500" ry="10" fill="#8d8d8d"/><path d="M201,1210h20M200,1216h22M201,1222h20" stroke="#8d8d8d" stroke-width="2.200"/><path d="M205,1207 l-3,-4 M217,1207 l3,-4" stroke="#8d8d8d" stroke-width="1.800"/><path d="M210,1210 L222,1218 L210,1226 Z" fill="#2fa447"/><circle cx="220" cy="1226" r="4.200" fill="#3d9c3d" stroke="#666" stroke-width="1.300"/></g>
<g><circle cx="384" cy="1218" r="7.500" fill="#f2c99a"/><path d="M376,1215 Q378,1207 386,1208 Q393,1209 392,1216 Q386,1212 376,1215Z" fill="#444"/><path d="M374,1230 Q374,1224 384,1224 Q394,1224 394,1230 Z" fill="#3d94cf"/><ellipse cx="374" cy="1207.500" rx="5" ry="3.800" fill="#fff" stroke="#555" stroke-width="1"/><path d="M371.500,1206.500h5M371.500,1208.500h5" stroke="#555" stroke-width=".8"/></g>
<g fill="#7aa716"><path d="M521,1213 A8,8.500 0 0 1 537,1213 Z"/><rect x="521" y="1214.500" width="16" height="11.500" rx="1.500"/><rect x="516.500" y="1214.500" width="3.200" height="9" rx="1.500"/><rect x="538.300" y="1214.500" width="3.200" height="9" rx="1.500"/><rect x="523.500" y="1223" width="3.500" height="7.500" rx="1.500"/><rect x="531" y="1223" width="3.500" height="7.500" rx="1.500"/><path d="M523,1203 l2.500,4 M535,1203 l-2.500,4" stroke="#7aa716" stroke-width="1.300"/></g>
<rect x="803" y="1206.500" width="20.500" height="19.500" fill="#555" stroke="#808080" stroke-width="2.500"/><path d="M806.500,1212 L811,1216 L806.500,1220 M812.500,1221.500 h7" stroke="#fff" stroke-width="1.700" fill="none"/>
<rect x="976.500" y="1205.500" width="19.500" height="22.500" fill="#f2c078" stroke="#e8a755" stroke-width="2"/><path d="M980,1211h12M980,1214.500h12M980,1218h12M980,1221.500h8" stroke="#8a6a3a" stroke-width="1.400" stroke-dasharray="3 1"/>
</svg>
<div class="pr" style="left:577px;top:271px;width:579px;height:75px"></div>
<div class="pr" style="left:1010px;top:44px;width:62px;height:58px"></div>
<div class="pr" style="left:88px;top:768px;width:1218px;height:435px;border-radius:10px"></div>
<svg id="ann" width="1458" height="1276" style="left:0;top:0;pointer-events:none">
<defs><filter id="sh" x="-20%" y="-20%" width="140%" height="140%"><feDropShadow dx="0" dy="1.500" stdDeviation="1.200" flood-color="#000" flood-opacity=".35"/></filter></defs>
<g fill="#ff2e6d" filter="url(#sh)">
<path d="M1047.500,207 Q1049,208 1048,209.500 Q1018,226 1000,246 L1004,257.500 L959.500,260 L984,221.500 L986.500,233 Q1014,217 1047.500,207 Z"/>
<path d="M1132.500,62.500 Q1134,63.500 1133,65 Q1112,73 1096.500,76.500 L1099.500,85 L1072,78 L1094.500,59 L1093.500,67.500 Q1112,66 1132.500,62.500 Z"/>
<path d="M963,657.500 Q966.500,657.500 966.500,661 Q925,695 883,737 L895.500,747 L828,757.500 L860,697 L866,713.500 Q915,690 963,657.500 Z"/>
</g>
<g filter="url(#sh)">
<clipPath id="c1w"><rect x="1050" y="170" width="50" height="39"/><path d="M1068.800,205 H1084.900 V219 Q1084.900,223.300 1080.500,223.300 H1073.200 Q1068.800,223.300 1068.800,219 Z"/></clipPath><clipPath id="c1p"><rect x="1050" y="170" width="50" height="41"/><rect x="1073.300" y="205" width="7.200" height="13.800"/></clipPath>
<text x="1062.100" y="218.500" font-size="49" font-family="Liberation Sans,sans-serif" font-weight="bold" fill="#fff" stroke="#fff" stroke-width="9" stroke-linejoin="round" clip-path="url(#c1w)">1</text>
<text x="1062.100" y="218.500" font-size="49" font-family="Liberation Sans,sans-serif" font-weight="bold" fill="#ff2e6d" clip-path="url(#c1p)">1</text>
<text class="num" x="1145.500" y="81.500" font-size="48" stroke-width="7.500">2</text>
<text class="num" x="979.500" y="667.500" font-size="48" stroke-width="8">3</text>
</g>
</svg>
</body></html>
